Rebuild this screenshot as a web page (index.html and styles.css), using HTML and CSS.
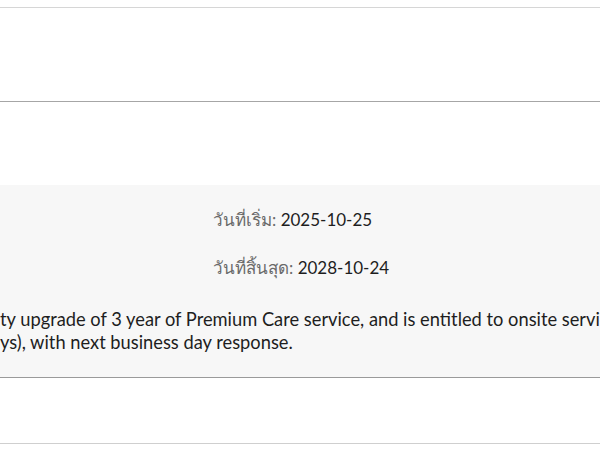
FILE: index.html
```html
<!DOCTYPE html>
<html lang="th">
<head>
<meta charset="utf-8">
<link rel="stylesheet" href="styles.css">
</head>
<body>
<div class="page">
  <div class="panel panel-top"></div>
  <div class="gap"></div>
  <div class="panel panel-grey">
    <div class="dates">
      <div class="date-row"><span class="label">วันที่เริ่ม:</span> <span class="value">2025-10-25</span></div>
      <div class="date-row"><span class="label">วันที่สิ้นสุด:</span> <span class="value">2028-10-24</span></div>
    </div>
    <div class="desc">
      <div class="desc-line">ty upgrade of 3 year of Premium Care service, and is entitled to onsite service</div>
      <div class="desc-line">ys), with next business day response.</div>
    </div>
  </div>
  <div class="panel panel-bottom"></div>
</div>
</body>
</html>
```
FILE: styles.css
```css
html, body {
  margin: 0;
  padding: 0;
  background: #ffffff;
}
body {
  font-family: Lato, "Noto Sans", sans-serif;
  color: #222222;
  width: 600px;
  height: 450px;
  overflow: hidden;
}
.page {
  padding-top: 7px;
}
.panel-top {
  border-top: 1px solid #d6d6d6;
  border-bottom: 1px solid #a6a6a6;
  height: 93px;
}
.gap {
  height: 83px;
}
.panel-grey {
  background: #f7f7f7;
  border-bottom: 1px solid #9a9a9a;
  height: 192px;
  display: flex;
  flex-direction: column;
}
.dates {
  padding-top: 23px;
  padding-left: 213px;
  display: flex;
  flex-direction: column;
  gap: 24px;
}
.date-row {
  font-size: 17px;
  line-height: 24px;
  white-space: nowrap;
}
.label {
  color: #6a6a6a;
}
.value {
  color: #1e1e1e;
}
.desc {
  margin-top: 28px;
  font-size: 18.3px;
  line-height: 23px;
  color: #1e1e1e;
  overflow: hidden;
}
.desc-line {
  white-space: nowrap;
}
.panel-bottom {
  height: 65px;
  border-bottom: 1px solid #cfcfcf;
}
```
